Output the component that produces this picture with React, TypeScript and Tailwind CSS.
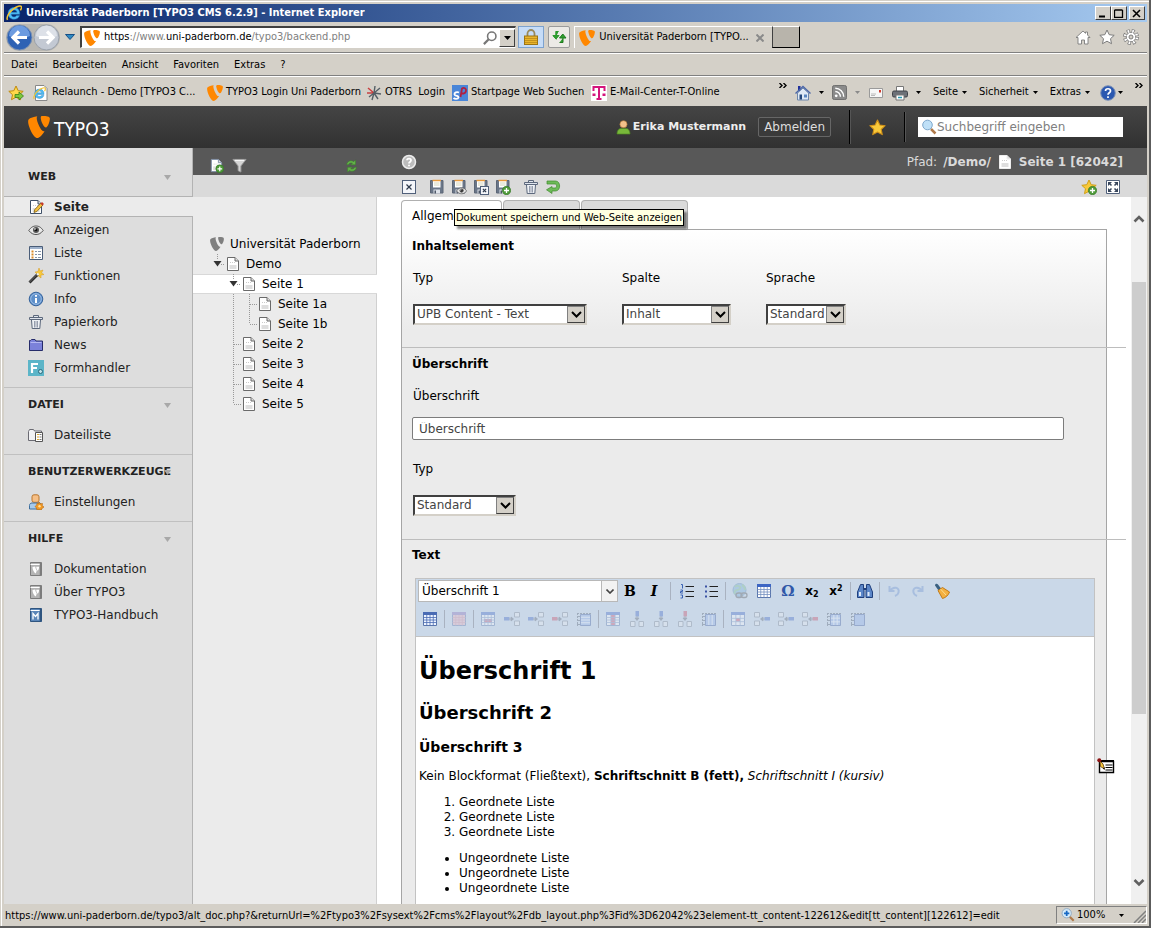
import { useState, type ReactNode } from "react";
import { clsx } from "clsx";

const T3_BIG =
  "M18.08 16.539c-.356.105-.64.144-1.012.144-3.048 0-7.524-10.652-7.524-14.197 0-1.305.31-1.74.745-2.114C6.56.808 2.082 2.177.651 3.917.34 4.352.155 5.037.155 5.907.155 11.442 6.063 24 10.23 24c1.928 0 5.179-3.172 7.85-7.461";
const T3_SMALL =
  "M16.136 0c3.855 0 7.709.622 7.709 2.797 0 4.415-2.8 9.765-4.23 9.765-2.549 0-5.72-7.09-5.72-10.635C13.895.311 14.517 0 16.136 0";

function Svg({ size = 16, box = 16, className, children }: { size?: number; box?: number; className?: string; children: ReactNode }) {
  return (
    <svg width={size} height={size} viewBox={`0 0 ${box} ${box}`} fill="none" className={clsx("shrink-0", className)} aria-hidden="true">
      {children}
    </svg>
  );
}

function Typo3Logo({ size = 16, color = "#ff8700" }: { size?: number; color?: string }) {
  return (
    <Svg size={size} box={24}>
      <path d={T3_BIG} fill={color} />
      <path d={T3_SMALL} fill={color} />
    </Svg>
  );
}

function Caret({ className = "text-black" }: { className?: string }) {
  return (
    <svg width="5" height="3" viewBox="0 0 5 3" className={clsx("shrink-0", className)} aria-hidden="true">
      <path d="M0 0h5L2.500 3z" fill="currentColor" />
    </svg>
  );
}

/* ---------- browser icons ---------- */

function IeLogo() {
  return (
    <>
      <path d="M13.800 9.300H5.300c.1 1.600 1.200 2.600 2.800 2.600 1.100 0 2-.5 2.500-1.300h3c-.8 2.300-2.900 3.700-5.500 3.700-3.500 0-6-2.400-6-5.800s2.500-5.900 6-5.900c3.400 0 5.800 2.500 5.700 6.700zM10.900 7.300c-.2-1.400-1.200-2.300-2.700-2.300-1.600 0-2.600.9-2.900 2.300z" fill="#4fbcf2" stroke="#1c78c0" strokeWidth=".5" />
      <path d="M1.500 14.800C0 12.500 3 7 7.500 3.800 11 1.200 14.500.3 15.300 1.500c.5.900 0 2.400-.9 3.800" stroke="#f4c430" strokeWidth="1.500" />
    </>
  );
}

function StarShape({ fill, stroke }: { fill: string; stroke: string }) {
  return <path d="M8 1l2.200 4.700 5 .6-3.700 3.400 1 5L8 12.200l-4.500 2.500 1-5L.8 6.300l5-.6z" fill={fill} stroke={stroke} strokeLinejoin="round" />;
}

function PlusBadge() {
  return (
    <>
      <circle cx="11.500" cy="11.500" r="4.200" fill="#4f9a3a" stroke="#2f7420" strokeWidth=".6" />
      <path d="M11.500 9v5M9 11.500h5" stroke="#fff" strokeWidth="1.300" />
    </>
  );
}

function Lock() {
  return (
    <Svg>
      <path d="M4.500 7V4.500a3.500 3.500 0 017 0V7" stroke="#9a8a5a" strokeWidth="1.800" />
      <rect x="1.500" y="7" width="13" height="8.500" fill="#e9b52c" stroke="#9c7414" />
      <path d="M2 9.500h12M2 11.500h12M2 13.500h12" stroke="#c4921c" />
    </Svg>
  );
}

function Refresh() {
  return (
    <Svg>
      <path d="M7.500 2H4.500v4.500H1.500L5.500 11V7" fill="#2f9e2f" />
      <path d="M7.500 2.500H5V7M2 6.500h6L5 10z" stroke="#2d9a2d" fill="#2f9e2f" />
      <path d="M8.500 13.500H12V9M8.500 9h6.500l-3.200-4z" stroke="#1f7a1f" fill="#2f9e2f" />
    </Svg>
  );
}

function House() {
  return (
    <Svg>
      <path d="M3 1h2.500v5H3z" fill="#20309c" />
      <path d="M2.500 8v7h11V8L8 3z" fill="#dfe9f5" stroke="#6c86ac" />
      <path d="M.5 8.500L8 1.500l7.500 7" stroke="#4a66a8" strokeWidth="1.400" />
      <path d="M4.500 9.500h2.500v5H4.500z" fill="#24487c" />
      <path d="M9 9.500h3v3H9z" fill="#5a86c0" />
    </Svg>
  );
}

function Magnifier() {
  return (
    <Svg>
      <path d="M10 10l4.500 4.500" stroke="#b07a4a" strokeWidth="2.500" />
      <circle cx="6.500" cy="6" r="4.800" fill="#bfe0f7" stroke="#7fa8cc" />
    </Svg>
  );
}

/* ---------- module icons ---------- */

function PageShape({ stroke = "#6a6a6a" }: { stroke?: string }) {
  return (
    <>
      <path d="M2.500 1.500h7.500l3.500 3.500v9.500h-11z" fill="#fff" stroke={stroke} />
      <path d="M10 1.500V5h3.500" stroke={stroke} fill="#ddd" />
      <path d="M5 6.500h6" stroke="#ccc" strokeDasharray="1 1" />
      <path d="M4.500 9h7v4h-7z" fill="#dedede" />
    </>
  );
}

function TrashShape() {
  return (
    <>
      <path d="M5.500 3V1.500h5V3M1.500 3.500h13v2h-13z" fill="#dfe4ec" stroke="#5c687c" />
      <path d="M3.500 6l.7 8.500h7.600L12.500 6" fill="#eef1f5" stroke="#5c687c" />
      <path d="M6.500 7v6.500M8 7v6.500M9.500 7v6.500" stroke="#7d889a" strokeWidth=".8" />
    </>
  );
}

function EyeShape() {
  return (
    <>
      <path d="M.8 8.500C3 5 5.500 4 8 4s5 1 7.200 4.500C13 11.500 10.500 12.500 8 12.500S3 11.500.8 8.500z" fill="#e8e8e8" stroke="#555" />
      <circle cx="8" cy="8" r="3" fill="#555" />
      <circle cx="8" cy="8" r="1.300" fill="#111" />
      <circle cx="7" cy="7" r=".8" fill="#fff" />
    </>
  );
}

function Book({ light, dark, children }: { light: string; dark: string; children: ReactNode }) {
  return (
    <Svg>
      <path d="M2.500 1.500h11v13h-11z" fill={light} stroke={dark} />
      <path d="M2.500 3.500h10" stroke="#fff" />
      <path d="M12.500 2v12.500" stroke={dark} strokeWidth="1.500" />
      {children}
    </Svg>
  );
}

function ManualV() {
  return (
    <Book light="#b4b4b4" dark="#7c7c7c">
      <path d="M4.500 6l2.700-.5c.2 1.500.8 3 1.600 4l-1 3C5.800 11.500 4.500 8.500 4.500 6zM8.200 5.700h2.800c.3 1.500-.5 3-1.300 4-.8-1-1.500-2.500-1.500-4z" fill="#fff" />
    </Book>
  );
}

const moduleIcons: Record<string, ReactNode> = {
  Seite: (
    <Svg>
      <PageShape stroke="#3f5068" />
      <path d="M6 13.500l.8-3L13 4l2 2-6.200 6.500z" fill="#f6c342" stroke="#7a5a10" strokeWidth=".8" />
      <path d="M12.300 4.700L14 3l2 2-1.600 1.600z" fill="#c63a2a" />
    </Svg>
  ),
  Anzeigen: (
    <Svg>
      <EyeShape />
    </Svg>
  ),
  Liste: (
    <Svg>
      <path d="M1.500 1.500h13v13h-13z" fill="#fff" stroke="#4a5d78" />
      <path d="M2 3h12" stroke="#9fb2cc" strokeWidth="2" />
      <path d="M3.500 6.500h2M3.500 9.500h2M3.500 12.500h2" stroke="#d98a28" strokeWidth="2" />
      <path d="M7 6.500h2M10 6.500h3M7 9.500h2M10 9.500h3M7 12.500h2M10 12.500h3" stroke="#8593a8" />
    </Svg>
  ),
  Funktionen: (
    <Svg>
      <path d="M11 0l1 3 3-1-1.500 3 2.500 1.500-3 .5v3l-2.500-2L8 9l1-3-2-2 3-.5z" fill="#f8c93a" stroke="#d89a1a" strokeWidth=".5" />
      <path d="M1.500 14.500l8-8" stroke="#2c2c2c" strokeWidth="2.800" />
      <path d="M1.500 14l7-7" stroke="#8a8a8a" strokeWidth=".7" />
      <path d="M9 7l1.500-1.500" stroke="#eee" strokeWidth="2.200" />
    </Svg>
  ),
  Info: (
    <Svg>
      <circle cx="8" cy="8" r="6.800" fill="#5d8fca" stroke="#35639c" />
      <circle cx="8" cy="8" r="5.300" stroke="#a9c7ea" strokeWidth=".8" />
      <path d="M8 4v1.800M8 7v5" stroke="#fff" strokeWidth="2" />
    </Svg>
  ),
  Papierkorb: (
    <Svg>
      <TrashShape />
    </Svg>
  ),
  News: (
    <Svg>
      <path d="M1.500 13.500v-10h1l1-1h3.500l1 1.500h6.500v9.500z" fill="#7b81da" stroke="#262c6a" />
      <path d="M2.500 5.500h11" stroke="#b3b7f2" />
    </Svg>
  ),
  Formhandler: (
    <Svg>
      <path d="M0 0h16v16H0z" fill="#5cb5c8" />
      <path d="M4 13V4h6M4 8h5" stroke="#fff" strokeWidth="2.200" />
      <circle cx="12.500" cy="11.500" r="2" fill="#bfe2ea" stroke="#2c6a7c" />
    </Svg>
  ),
  Dateiliste: (
    <Svg>
      <path d="M.5 13.500v-9l1-2h4l1 1.500h7v9.500z" fill="#f2f2f4" stroke="#6a6a72" />
      <path d="M7.500 5.500h7v9h-7z" fill="#fff" stroke="#555" />
      <path d="M9 7.500h2M9 10h2M9 12.500h2" stroke="#d9a52e" />
      <path d="M11.500 7.500h2M11.500 10h2M11.500 12.500h2" stroke="#777" />
    </Svg>
  ),
  Einstellungen: (
    <Svg>
      <rect x="4" y=".8" width="7" height="7.500" rx="2" fill="#f6bf86" stroke="#b9762e" />
      <path d="M1.500 15v-3.500c0-1.500 1-2.500 2.500-2.500h7c1.500 0 2.500 1 2.500 2.500V15z" fill="#a8cbec" stroke="#3e6f9e" />
      <path d="M11 8l1.300 1.800 2.200-.3-.3 2.200L16 13l-1.800 1.300-1 1.700-2.200-.5-2.200.3L8.500 14 7 12.500l1.700-1.300.3-2 1.700.3z" fill="#f29a24" stroke="#b9650a" strokeWidth=".6" />
      <circle cx="11.500" cy="12.300" r="1.200" fill="#ffe0a0" />
    </Svg>
  ),
  Dokumentation: <ManualV />,
  "Über TYPO3": <ManualV />,
  "TYPO3-Handbuch": (
    <Book light="#5b86b8" dark="#2f5580">
      <path d="M5 12.500v-6l2.500 3 2.500-3v6" stroke="#fff" strokeWidth="1.300" />
    </Book>
  ),
};

function Floppy({ children }: { children?: ReactNode }) {
  return (
    <Svg>
      <path d="M1.500 1.500h12.500v12.500h-12.500z" fill="#6a7688" stroke="#5c6676" />
      <path d="M4 2h7.500v6.500H4z" fill="#fff" />
      <path d="M3.500 1.500h8.500" stroke="#e89a3c" strokeWidth="1.500" />
      <path d="M5 4h5.500M5 6h5.500" stroke="#c9c9a8" strokeWidth=".8" />
      <path d="M4.500 10.500h6.500v4h-6.500z" fill="#dfe3ea" />
      <path d="M5.500 11.500h1.500v3h-1.500z" fill="#4c5666" />
      {children}
    </Svg>
  );
}

function CrossBox({ x = 0, y = 0, s = 14 }: { x?: number; y?: number; s?: number }) {
  const i = s * 0.32;
  return (
    <>
      <rect x={x + 0.5} y={y + 0.5} width={s - 1} height={s - 1} fill="#f4f6fa" stroke="#50607a" />
      <path d={`M${x + i} ${y + i}L${x + s - i} ${y + s - i}M${x + s - i} ${y + i}L${x + i} ${y + s - i}`} stroke="#2e3a4c" strokeWidth="1.200" />
    </>
  );
}

/* ---------- editor icons ---------- */

function Grid({ rows = 4, cols = 4, head = "#3d66c4", fill = "#fff", line = "#7590c0", mark }: { rows?: number; cols?: number; head?: string; fill?: string; line?: string; mark?: ReactNode }) {
  const w = 13 / cols;
  const h = 10 / rows;
  return (
    <Svg>
      <path d="M1.500 1.500h13v13h-13z" fill={fill} stroke="#5a76ac" />
      <path d="M1 2.500h14" stroke={head} strokeWidth="3" />
      {mark}
      {Array.from({ length: cols - 1 }, (_, i) => (
        <path key={`c${i}`} d={`M${1.5 + w * (i + 1)} 4v10.500`} stroke={line} strokeWidth=".8" />
      ))}
      {Array.from({ length: rows - 1 }, (_, i) => (
        <path key={`r${i}`} d={`M1.500 ${4 + h * (i + 1)}h13`} stroke={line} strokeWidth=".8" />
      ))}
    </Svg>
  );
}

// ruled table with a dashed left and top band
function RuledGrid({ cols = 4, rows = 4, fill = "#8fb0ea" }: { cols?: number; rows?: number; fill?: string }) {
  return (
    <Svg>
      <path d="M1 2.500h14M1.500 2v13" stroke="#555f70" strokeDasharray="2 1" />
      <path d="M4.500 3.500h10v11h-10z" fill={fill} stroke="#3c5a9c" />
      <path d="M1 5.500h3M1 9.500h3M1 13.500h3" stroke="#555f70" />
      {Array.from({ length: cols - 1 }, (_, i) => (
        <path key={`c${i}`} d={`M${4.5 + (10 / cols) * (i + 1)} 4v10`} stroke="#f4f8ff" />
      ))}
      {Array.from({ length: rows - 1 }, (_, i) => (
        <path key={`r${i}`} d={`M5 ${3.5 + (11 / rows) * (i + 1)}h9`} stroke="#f4f8ff" />
      ))}
    </Svg>
  );
}

function InsertCells({ turn, accent = "#3d66c4", flip }: { turn: 0 | 90; accent?: string; flip?: boolean }) {
  return (
    <Svg className="overflow-visible">
      <g transform={`rotate(${turn} 8 8)${flip ? " translate(16 0) scale(-1 1)" : ""}`}>
        <path d="M0 6h5.500v3.500H0z" fill={accent} />
        <path d="M5 8h4M7 6l2.500 2L7 10z" stroke="#5a6270" fill="#5a6270" strokeWidth=".8" />
        <path d="M10.500 1.500h5v4.500h-5zM10.500 10h5v4.500h-5z" fill="#eef0f4" stroke="#808894" />
      </g>
    </Svg>
  );
}

const redMark = <path d="M4 8h8v3.500H4z" fill="#d8506a" />;

const tableTools: { label: string; icon: ReactNode }[][] = [
  [
    { label: "Zeileneigenschaften", icon: <Grid mark={redMark} /> },
    { label: "Zeile oberhalb", icon: <InsertCells turn={0} /> },
    { label: "Zeile unterhalb", icon: <InsertCells turn={0} /> },
    { label: "Zeile löschen", icon: <InsertCells turn={0} accent="#c84860" /> },
    { label: "Zeile teilen", icon: <RuledGrid cols={1} rows={4} /> },
  ],
  [
    { label: "Spalteneigenschaften", icon: <Grid cols={3} mark={<path d="M6 4h4v10H6z" fill="#d8506a" />} /> },
    { label: "Spalte links", icon: <InsertCells turn={90} /> },
    { label: "Spalte rechts", icon: <InsertCells turn={90} /> },
    { label: "Spalte löschen", icon: <InsertCells turn={90} accent="#c84860" /> },
    { label: "Spalte teilen", icon: <RuledGrid cols={3} rows={1} /> },
  ],
  [
    { label: "Zelleneigenschaften", icon: <Grid cols={3} rows={3} mark={<path d="M6 7h4v3.500H6z" fill="#d8506a" />} /> },
    { label: "Zelle davor", icon: <InsertCells turn={0} flip /> },
    { label: "Zelle danach", icon: <InsertCells turn={0} flip /> },
    { label: "Zelle löschen", icon: <InsertCells turn={0} flip accent="#c84860" /> },
    { label: "Zelle teilen", icon: <RuledGrid cols={3} rows={3} /> },
    { label: "Zellen verbinden", icon: <RuledGrid cols={1} rows={1} /> },
  ],
];

function Tool({ label, faded, children }: { label: string; faded?: boolean; children: ReactNode }) {
  return (
    <button type="button" aria-label={label} disabled={faded} className={clsx("flex h-6 w-6 items-center justify-center text-black", faded && "opacity-35")}>
      {children}
    </button>
  );
}

function Sep({ wide }: { wide?: boolean }) {
  return <span className={clsx("h-[18px] w-px bg-[#a9b2c0]", wide ? "mx-1" : "mx-0.5")} />;
}

/* ---------- browser chrome ---------- */

function WindowButton({ label, children }: { label: string; children: ReactNode }) {
  return (
    <button type="button" aria-label={label} className="flex h-[14px] w-4 items-center justify-center border border-t-white border-r-[#404040] border-b-[#404040] border-l-white bg-[#d4d0c8]">
      <svg width="10" height="9" viewBox="0 0 10 9" fill="none" stroke="#000" aria-hidden="true">
        {children}
      </svg>
    </button>
  );
}

function TitleBar() {
  return (
    <div className="flex h-[18px] items-center gap-1 bg-linear-to-r from-[#0a246a] to-[#a6caf0] px-0.5 text-[11px] font-bold text-white">
      <Svg>
        <IeLogo />
      </Svg>
      <span className="truncate">Universität Paderborn [TYPO3 CMS 6.2.9] - Internet Explorer</span>
      <div className="ml-auto flex">
        <WindowButton label="Minimieren">
          <path d="M1 7.500h6" strokeWidth="2" />
        </WindowButton>
        <WindowButton label="Maximieren">
          <path d="M.5 1h8M.5 1v7.500h8V1" strokeWidth="1.300" />
        </WindowButton>
        <span className="w-0.5" />
        <WindowButton label="Schließen">
          <path d="M1 1l7 7M8 1L1 8" strokeWidth="1.600" />
        </WindowButton>
      </div>
    </div>
  );
}

function AddressBar() {
  return (
    <div className="flex h-[31px] items-center border-b border-[#808080] pr-2 pl-0.5">
      <div className="flex items-center rounded-full bg-[#b9b7b2]">
        <button type="button" aria-label="Zurück">
          <Svg size={27} box={27}>
            <circle cx="13.500" cy="13.500" r="12.500" fill="#2e62b4" stroke="#7d93b4" />
            <path d="M3 12a10.500 10.500 0 0121 0c-7 3-14 3-21 0z" fill="#6c9be0" />
            <path d="M21 13.500H8M13 7.500l-6 6 6 6" stroke="#fff" strokeWidth="3.200" />
          </Svg>
        </button>
        <button type="button" aria-label="Vorwärts">
          <Svg size={27} box={27}>
            <circle cx="13.500" cy="13.500" r="12.500" fill="#c3c9d3" stroke="#9aa1ab" />
            <path d="M3 12a10.500 10.500 0 0121 0c-7 3-14 3-21 0z" fill="#dde1e8" />
            <path d="M6 13.500h13M14 7.500l6 6-6 6" stroke="#fff" strokeWidth="3.200" />
          </Svg>
        </button>
      </div>
      <button type="button" aria-label="Verlauf" className="flex w-5 justify-center">
        <svg width="10" height="6" viewBox="0 0 10 6" aria-hidden="true">
          <path d="M.5.5h9L5 5.500z" fill="#2f8ac4" stroke="#174f86" />
        </svg>
      </button>
      <div className="flex h-[22px] min-w-0 flex-[435] items-center border-t-2 border-r border-b border-l-2 border-t-[#404040] border-r-[#d4d0c8] border-b-white border-l-[#404040] bg-white">
        <span className="ml-0.5">
          <Typo3Logo />
        </span>
        <div role="textbox" aria-label="Adresse" contentEditable suppressContentEditableWarning className="min-w-0 flex-1 truncate px-1 text-[11px] text-[#808080] outline-none">
          <span className="text-black">https</span>://www.<span className="text-black">uni-paderborn.de</span>/typo3/backend.php
        </div>
        <button type="button" aria-label="Suchen" className="mr-0.5">
          <Svg size={14}>
            <circle cx="10" cy="6" r="4.800" stroke="#777" strokeWidth="1.800" />
            <path d="M6.500 9.500L1 15" stroke="#777" strokeWidth="2.500" />
          </Svg>
        </button>
        <button type="button" aria-label="Adressliste" className="flex h-[18px] w-4 items-center justify-center border border-t-white border-r-[#404040] border-b-[#404040] border-l-white bg-[#d4d0c8]">
          <svg width="7" height="4" viewBox="0 0 7 4" aria-hidden="true">
            <path d="M0 0h7L3.500 4z" />
          </svg>
        </button>
      </div>
      <button type="button" aria-label="Sicherheitsbericht" className="ml-0.5 flex h-[22px] w-[26px] items-center justify-center border border-[#7da2ce] bg-[#c6dcf7]">
        <Lock />
      </button>
      <button type="button" aria-label="Aktualisieren" className="ml-1 flex h-[22px] w-[22px] items-center justify-center rounded-xs border border-[#9a9a9a] bg-[#eceae6]">
        <Refresh />
      </button>
      <div className="flex min-w-0 flex-[571] items-center">
        <div className="ml-1 flex h-[22px] w-[198px] items-center gap-1 border-t border-l border-white pl-1 text-[11px]">
          <Typo3Logo />
          <span className="flex-1 whitespace-nowrap">Universität Paderborn [TYPO...</span>
          <button type="button" aria-label="Tab schließen" className="mr-2">
            <Svg size={8} box={8}>
              <path d="M.5.5l7 7M7.500.5l-7 7" stroke="#8a8a8a" strokeWidth="2" />
            </Svg>
          </button>
        </div>
        <button type="button" aria-label="Neuer Tab" className="h-[22px] w-7 border border-t-white border-r-black border-b-black border-l-[#404040] bg-[#b8b4ab]" />
        <div className="ml-auto flex gap-2">
          <Svg>
            <path d="M1 8.500L8 2l2.500 2.300V3h2v3L15 8.500h-2V15H9.500v-4h-3v4H3V8.500z" fill="#fff" stroke="#7c7c7c" strokeWidth=".9" />
          </Svg>
          <Svg>
            <StarShape fill="#fff" stroke="#7c7c7c" />
          </Svg>
          <Svg>
            <circle cx="8" cy="8" r="6" stroke="#7c7c7c" strokeWidth="4" strokeDasharray="2.800 1.910" />
            <circle cx="8" cy="8" r="4.800" fill="#fff" stroke="#7c7c7c" />
            <circle cx="8" cy="8" r="6" stroke="#fff" strokeWidth="2.600" strokeDasharray="1.600 3.110" strokeDashoffset="-.6" />
            <circle cx="8" cy="8" r="2" fill="#d4d0c8" stroke="#7c7c7c" />
          </Svg>
        </div>
      </div>
    </div>
  );
}

const favourites: { label: string; width: string; icon: ReactNode }[] = [
  {
    label: "Relaunch - Demo [TYPO3 C...",
    width: "w-[174px]",
    icon: (
      <Svg>
        <path d="M2.500.5h8.500l3 3v12h-11.500z" fill="#fff" stroke="#888" />
        <g transform="translate(0 2) scale(.8)">
          <IeLogo />
        </g>
      </Svg>
    ),
  },
  { label: "TYPO3 Login Uni Paderborn", width: "w-[159px]", icon: <Typo3Logo /> },
  {
    label: "OTRS  Login",
    width: "w-[86px]",
    icon: (
      <Svg>
        <path d="M8 8L2 3M8 8H1" stroke="#c84040" strokeWidth="1.500" />
        <path d="M8 8l1-7M8 8l6-5M8 8l7 1M8 8l4 6M8 8l-2 7M8 8l-5 4" stroke="#555f66" strokeWidth="1.400" />
      </Svg>
    ),
  },
  {
    label: "Startpage Web Suchen",
    width: "w-[139px]",
    icon: (
      <Svg>
        <path d="M0 0h16v16H0z" fill="#4a86d8" />
        <path d="M7 7.500C5 6.500 2 7.500 2.500 9.500S7 10.500 6.500 12.500 2.500 14 1.500 13" stroke="#fff" strokeWidth="1.800" />
        <path d="M8.500 12L10 3.500c2-1.500 4.500 0 4 2.500s-3 3-5 2" stroke="#b02040" strokeWidth="1.800" />
      </Svg>
    ),
  },
  {
    label: "E-Mail-Center-T-Online",
    width: "w-[130px]",
    icon: (
      <Svg>
        <path d="M0 0h16v16H0z" fill="#fff" />
        <path d="M2.500 6V2h11v4M8 2v11.500M5.500 14h5" stroke="#d4147c" strokeWidth="2" />
        <path d="M1.500 8.500h3V11h-3zM11.500 8.500h3V11h-3z" fill="#d4147c" />
      </Svg>
    ),
  },
];

function CommandMenu({ label }: { label: string }) {
  return (
    <button type="button" className="flex items-center gap-1">
      {label}
      <Caret />
    </button>
  );
}

function More() {
  return (
    <svg width="8" height="5" viewBox="0 0 8 5" fill="none" className="mt-1 shrink-0 self-start" aria-hidden="true">
      <path d="M.5 0L3 2.500.5 5M4.500 0L7 2.500 4.500 5" stroke="#000" strokeWidth="1.400" />
    </svg>
  );
}

function FavouritesBar() {
  return (
    <div className="flex h-[29px] items-center px-1 pt-0.5 text-[11px] whitespace-nowrap">
      <button type="button" aria-label="Zu Favoriten hinzufügen" className="mr-[9px]">
        <Svg>
          <StarShape fill="#ffd84a" stroke="#c08a10" />
          <path d="M7 9.500h4V7l4.500 4-4.500 4v-2.500H7z" fill="#7cc83c" stroke="#3a7d14" strokeWidth=".8" />
        </Svg>
      </button>
      {favourites.map((f) => (
        <a key={f.label} href="#" className={clsx("flex items-center gap-[3px]", f.width)}>
          {f.icon}
          <span className="whitespace-pre">{f.label}</span>
        </a>
      ))}
      <div className="ml-auto flex h-full items-center">
        <More />
        <span className="w-2" />
        <House />
        <span className="mx-2">
          <Caret />
        </span>
        <Svg size={15}>
          <rect x=".5" y=".5" width="15" height="15" rx="2" fill="#8a8a8a" stroke="#6c6c6c" />
          <circle cx="4.500" cy="11.500" r="1.500" fill="#fff" />
          <path d="M3.500 7a5.500 5.500 0 015.500 5.500M3.500 3.500a9 9 0 019 9" stroke="#fff" strokeWidth="1.500" />
        </Svg>
        <span className="mx-2">
          <Caret className="text-[#8a8a8a]" />
        </span>
        <Svg>
          <path d="M1.500 3.500h13v9h-13z" fill="#f7f7f7" stroke="#9a9a9a" />
          <path d="M11 5h2v2.500h-2z" fill="#d23a2a" />
          <path d="M3 9h5M3 10.500h4" stroke="#bbb" />
        </Svg>
        <Svg className="ml-2">
          <path d="M4.500 1.500h7V7h-7z" fill="#fff" stroke="#777" />
          <rect x=".5" y="6" width="15" height="6" rx="1.500" fill="#6d7178" stroke="#3f4248" />
          <path d="M4 10h8v5H4z" fill="#fff" stroke="#777" />
          <path d="M6 12.500h4" stroke="#2a9ab0" strokeWidth="1.500" />
        </Svg>
        <span className="mr-3 ml-2">
          <Caret />
        </span>
        <div className="flex gap-3">
          <CommandMenu label="Seite" />
          <CommandMenu label="Sicherheit" />
          <CommandMenu label="Extras" />
        </div>
        <Svg className="ml-2.5">
          <circle cx="8" cy="8" r="7.300" fill="#2b58b0" stroke="#7f93b8" />
          <path d="M5.500 6C5.500 3 10.500 3 10.500 6c0 1.800-2.500 1.800-2.500 3.800M8 11.200V13" stroke="#fff" strokeWidth="1.700" />
        </Svg>
        <span className="mr-3 ml-0.5">
          <Caret />
        </span>
        <More />
      </div>
    </div>
  );
}

/* ---------- TYPO3 backend ---------- */

function TopBar() {
  return (
    <header className="flex h-[42px] items-center bg-linear-to-b from-[#454545] to-[#313131] pr-6 pl-6 text-[12px]">
      <Typo3Logo size={22} />
      <span className="mt-1 ml-1 font-['DejaVu_Sans_Condensed','DejaVu_Sans',sans-serif] text-[19px] leading-none text-white">TYPO3</span>
      <div className="ml-auto flex items-center">
        <Svg size={15}>
          <circle cx="8" cy="4.500" r="3.800" fill="#f3c08a" stroke="#b47a3a" strokeWidth=".7" />
          <path d="M1 15c0-4 2-6 4.500-6h5C13 9 15 11 15 15z" fill="#78b83a" stroke="#4c8420" strokeWidth=".7" />
        </Svg>
        <span className="ml-0.5 text-[11px] font-bold text-[#eee]">Erika Mustermann</span>
        <button type="button" className="ml-3 h-5 rounded-xs border border-[#666] bg-[#3a3a3a] px-[5px] leading-none text-[#ddd]">
          Abmelden
        </button>
        <span className="ml-[18px] h-[34px] w-0.5 border-r border-[#555] bg-black" />
        <button type="button" aria-label="Lesezeichen" className="mx-[18px]">
          <Svg size={17}>
            <StarShape fill="#f8c93a" stroke="#d09018" />
          </Svg>
        </button>
        <span className="h-[30px] w-0.5 border-r border-[#555] bg-black" />
        <label className="ml-3 flex h-5 w-[205px] items-center bg-white pl-[3px]">
          <Magnifier />
          <input type="search" aria-label="Suche" placeholder="Suchbegriff eingeben" className="min-w-0 flex-1 outline-none placeholder:text-[#808080]" />
        </label>
      </div>
    </header>
  );
}

const modules = [
  { title: "WEB", items: ["Seite", "Anzeigen", "Liste", "Funktionen", "Info", "Papierkorb", "News", "Formhandler"] },
  { title: "DATEI", items: ["Dateiliste"] },
  { title: "BENUTZERWERKZEUGE", items: ["Einstellungen"] },
  { title: "HILFE", items: ["Dokumentation", "Über TYPO3", "TYPO3-Handbuch"] },
];

function ModuleMenu() {
  return (
    <nav className="flex w-[189px] shrink-0 flex-col border-r border-[#b3b3b3] bg-[#dddddd] text-[12px] text-[#222]">
      {modules.map((group, g) => (
        <section key={group.title} className={clsx("pb-2", g < modules.length - 1 && "border-b border-[#c0c0c0]")}>
          <h2 className={clsx("flex items-center pl-6 text-[11px] font-bold", g === 0 ? "h-12 pt-2.5" : "h-[35px]")}>
            <span className="w-[136px] whitespace-nowrap">{group.title}</span>
            <svg width="7" height="5" viewBox="0 0 7 5" className="shrink-0" aria-hidden="true">
              <path d="M0 0h7L3.500 5z" fill="#a8a8a8" />
            </svg>
          </h2>
          {group.items.map((item) => (
            <a
              key={item}
              href="#"
              className={clsx(
                "flex items-center gap-2.5 pl-6",
                item === "Seite" ? "relative -mr-px mb-px h-[21px] border-y border-[#b3b3b3] bg-[#ebebeb] font-bold" : "h-[23px]",
              )}
            >
              {moduleIcons[item]}
              {item}
            </a>
          ))}
        </section>
      ))}
    </nav>
  );
}

type Guide = "blank" | "line" | "tee" | "end" | "open";

const guidePaths: Record<Guide, string> = {
  blank: "",
  line: "M8.500 0v20",
  tee: "M8.500 0v20M9 10.500h7",
  end: "M8.500 0v10M9 10.500h7",
  open: "M8.500 0v6M12 10.500h4",
};

const tree: { label: string; guides: Guide[]; root?: boolean }[] = [
  { label: "Universität Paderborn", guides: [], root: true },
  { label: "Demo", guides: ["open"] },
  { label: "Seite 1", guides: ["blank", "open"] },
  { label: "Seite 1a", guides: ["blank", "line", "tee"] },
  { label: "Seite 1b", guides: ["blank", "line", "end"] },
  { label: "Seite 2", guides: ["blank", "tee"] },
  { label: "Seite 3", guides: ["blank", "tee"] },
  { label: "Seite 4", guides: ["blank", "tee"] },
  { label: "Seite 5", guides: ["blank", "end"] },
];

function PageTree() {
  const [selected, setSelected] = useState("Seite 1");

  return (
    <aside className="flex w-[184px] shrink-0 flex-col">
      <div className="flex h-[27px] shrink-0 items-center bg-[#585858] pt-2 pr-[18px] pl-4">
        <Svg size={15}>
          <PageShape stroke="#7f8ea6" />
          <PlusBadge />
        </Svg>
        <Svg size={15} className="ml-2">
          <path d="M1 1.500h14L9.500 8.500v6.500l-3-1.500v-5z" fill="#d4d4d4" stroke="#9a9a9a" />
          <path d="M3 2.500h10" stroke="#fff" />
        </Svg>
        <Svg size={14} className="ml-auto">
          <path d="M2 6.500C2 3 6.500.5 10 3l2-2v5.500H6.500L8.500 5C7 4 4.500 4.800 4 6.500z" fill="#62b04a" stroke="#3c8228" strokeWidth=".6" />
          <path d="M13 9.500c0 3.500-4.500 6-8 3.500l-2 2V9.500h5.500L6.500 11c1.500 1 4 .2 4.500-1.500z" fill="#62b04a" stroke="#3c8228" strokeWidth=".6" />
        </Svg>
      </div>
      <div className="h-[22px] shrink-0 bg-[#dadada]" />
      <ul className="flex-1 border-r border-[#d0d0d0] bg-[#ebebeb] pt-[37px] text-[12px] text-black">
        {tree.map((node) => (
          <li key={node.label} className={clsx("h-5", selected === node.label && "relative -mr-px border-y border-[#d8d8d8] bg-white")}>
            <button type="button" onClick={() => setSelected(node.label)} className="flex h-full w-full items-center pl-4">
              {node.guides.map((g, i) => (
                <svg key={i} width="16" height="20" viewBox="0 0 16 20" fill="none" className="shrink-0" aria-hidden="true">
                  <path d={guidePaths[g]} stroke="#999" strokeDasharray="1 1" />
                  {g === "open" && <path d="M4.500 7h8l-4 5.500z" fill="#333" />}
                </svg>
              ))}
              {node.root ? (
                <span className="mx-px">
                  <Typo3Logo size={14} color="#7f7f7f" />
                </span>
              ) : (
                <Svg>
                  <PageShape />
                </Svg>
              )}
              <span className="ml-[5px] whitespace-nowrap">{node.label}</span>
            </button>
          </li>
        ))}
      </ul>
    </aside>
  );
}

function DocHeader() {
  return (
    <>
      <div className="flex h-[27px] shrink-0 items-center bg-[#585858] pr-6 pl-6 text-[12px] text-[#dadada]">
        <Svg>
          <circle cx="8" cy="8" r="6.500" fill="#bcbcbc" stroke="#ededed" strokeWidth="1.500" />
          <path d="M6 6.300C6 4 10 4 10 6.300 10 8 8 8 8 9.500M8 10.800v1.500" stroke="#fff" strokeWidth="1.800" />
        </Svg>
        <div className="ml-auto flex items-center gap-1.5 whitespace-nowrap">
          Pfad: <b>/Demo/</b>
          <Svg>
            <PageShape stroke="#eee" />
          </Svg>
          <b>Seite 1 [62042]</b>
        </div>
      </div>
      <div className="flex h-[22px] shrink-0 items-center bg-[#dadada] pt-px pr-[26px] pl-6">
        <button type="button" aria-label="Schließen">
          <Svg>
            <CrossBox x={1} y={1} />
          </Svg>
        </button>
        <div className="ml-3 flex gap-[6px]">
          <button type="button" aria-label="Dokument speichern">
            <Floppy />
          </button>
          <button type="button" aria-label="Dokument speichern und Web-Seite anzeigen">
            <Floppy>
              <g transform="translate(5 6) scale(.7)">
                <EyeShape />
              </g>
            </Floppy>
          </button>
          <button type="button" aria-label="Dokument speichern und schließen">
            <Floppy>
              <CrossBox x={7} y={7} s={9} />
            </Floppy>
          </button>
          <button type="button" aria-label="Dokument speichern und neu">
            <Floppy>
              <PlusBadge />
            </Floppy>
          </button>
        </div>
        <button type="button" aria-label="Löschen" className="ml-3">
          <Svg>
            <TrashShape />
          </Svg>
        </button>
        <button type="button" aria-label="Rückgängig" className="ml-1.5">
          <Svg>
            <path d="M2 2h8.500c5.500 0 5.500 10 0 10H7v2.500l-5.500-3.700L7 7.500V9h3c2.200 0 2.200-4 0-4H2z" fill="#6dba58" stroke="#3f8a2c" strokeWidth=".7" />
          </Svg>
        </button>
        <button type="button" aria-label="Lesezeichen anlegen" className="ml-auto">
          <Svg>
            <StarShape fill="#f8c93a" stroke="#d0a018" />
            <PlusBadge />
          </Svg>
        </button>
        <button type="button" aria-label="In neuem Fenster öffnen" className="ml-2">
          <Svg>
            <path d="M1.500 1.500h13v13h-13z" fill="#fff" stroke="#50607a" />
            <path d="M3 3h4L3 7zM13 3H9l4 4zM3 13h4L3 9zM13 13H9l4-4z" fill="#38465c" />
            <path d="M4 4l2.500 2.500M12 4L9.500 6.500M4 12l2.500-2.500M12 12L9.500 9.500" stroke="#38465c" strokeWidth="1.500" />
          </Svg>
        </button>
      </div>
    </>
  );
}

function Select({ id, options, width }: { id: string; options: string[]; width: string }) {
  return (
    <div className={clsx("relative h-[21px] border-2 border-t-[#404040] border-r-[#d4d0c8] border-b-[#d4d0c8] border-l-[#404040] bg-white", width)}>
      <select id={id} className="block h-full w-full appearance-none pl-0.5 text-[12px] leading-[17px] text-[#444] outline-none">
        {options.map((o) => (
          <option key={o}>{o}</option>
        ))}
      </select>
      <span className="pointer-events-none absolute inset-y-0 right-0 flex w-[18px] items-center justify-center border border-t-[#808080] border-r-[#404040] border-b-[#404040] border-l-[#808080] bg-[#d4d0c8]">
        <svg width="11" height="7" viewBox="0 0 11 7" fill="none" aria-hidden="true">
          <path d="M1 1l4.500 4.500L10 1" stroke="#000" strokeWidth="2" />
        </svg>
      </span>
    </div>
  );
}

function Field({ id, label, children }: { id: string; label: string; children: ReactNode }) {
  return (
    <div className="flex flex-col gap-4">
      <label htmlFor={id} className="leading-5">
        {label}
      </label>
      {children}
    </div>
  );
}

function Tabs() {
  return (
    <div className="relative flex items-end gap-px">
      <button type="button" className="relative z-10 -mb-px h-[30px] w-[101px] rounded-t-sm border border-b-0 border-[#b0b0b0] bg-white pl-2.5 text-left">
        Allgemein
      </button>
      <button type="button" aria-label="Tab 2" className="h-[29px] w-[77px] rounded-t-sm border border-b-0 border-[#b0b0b0] bg-[#dadada]" />
      <button type="button" aria-label="Tab 3" className="h-[29px] w-[107px] rounded-t-sm border border-b-0 border-[#b0b0b0] bg-[#dadada]" />
      <div role="tooltip" className="absolute top-[9px] left-[53px] z-20 border border-black bg-[#ffffe1] px-px font-['DejaVu_Sans_Condensed','DejaVu_Sans',sans-serif] text-[11px] leading-[15px] whitespace-nowrap shadow-[3px_3px_2px_rgba(0,0,0,0.45)]">
        Dokument speichern und Web-Seite anzeigen
      </div>
    </div>
  );
}

function Editor() {
  return (
    <div className="mr-[11px] ml-[13px] flex min-h-[340px] flex-1 flex-col border border-b-0 border-[#c2c2c2]">
      <div className="border-b border-[#c2c2c2] bg-[#cad8e8] px-0.5 pb-[5px]">
        <div className="flex h-6 items-center">
          <div className="relative h-[22px] w-[200px] border border-[#b8b8b8] bg-white">
            <select aria-label="Blockformat" className="block h-full w-full appearance-none pl-[3px] text-[12px] leading-5 text-black outline-none">
              <option>Überschrift 1</option>
              <option>Überschrift 2</option>
              <option>Überschrift 3</option>
            </select>
            <span className="pointer-events-none absolute inset-y-0 right-0 flex w-4 items-center justify-center border-l border-[#b8b8b8] bg-[#f2f2f2]">
              <svg width="8" height="5" viewBox="0 0 8 5" fill="none" aria-hidden="true">
                <path d="M.5.5L4 4 7.500.5" stroke="#444" strokeWidth="1.600" />
              </svg>
            </span>
          </div>
          <Tool label="Fett">
            <b className="font-['DejaVu_Serif',serif] text-[14px]">B</b>
          </Tool>
          <Tool label="Kursiv">
            <i className="font-['DejaVu_Serif',serif] text-[14px] font-bold">I</i>
          </Tool>
          <Sep wide />
          <Tool label="Geordnete Liste">
            <Svg>
              <path d="M6.500 3.500H15M6.500 8.500H15M6.500 13.500H15" stroke="#222" />
              <path d="M2 1.500h1.500v4M1.500 7h2v1.500h-2V10h2.500M1.500 12h2v3h-2" stroke="#3a62b4" />
            </Svg>
          </Tool>
          <Tool label="Ungeordnete Liste">
            <Svg>
              <path d="M6.500 3.500H15M6.500 8.500H15M6.500 13.500H15" stroke="#222" />
              <path d="M2 2.500h2v2H2zM2 7.500h2v2H2zM2 12.500h2v2H2z" fill="#3a52a4" />
            </Svg>
          </Tool>
          <Sep />
          <Tool label="Link" faded>
            <Svg>
              <circle cx="7.500" cy="7" r="6.500" fill="#7ab0dc" stroke="#5a88b4" />
              <path d="M3 4c2-2 4-1 5 0s-1 3-3 3-3 2-2 4M10 2c2 1 3 3 3 5" stroke="#7cc08c" strokeWidth="2" />
              <rect x="4" y="10" width="6" height="4.500" rx="2.200" stroke="#555" strokeWidth="1.300" />
              <rect x="9" y="10" width="6" height="4.500" rx="2.200" stroke="#555" strokeWidth="1.300" />
            </Svg>
          </Tool>
          <Tool label="Tabelle einfügen">
            <Grid />
          </Tool>
          <Tool label="Sonderzeichen">
            <span className="font-['DejaVu_Serif',serif] text-[15px] font-bold text-[#3058a8]">Ω</span>
          </Tool>
          <Tool label="Tiefgestellt">
            <span className="text-[12px] font-bold">
              x<sub className="text-[8px]">2</sub>
            </span>
          </Tool>
          <Tool label="Hochgestellt">
            <span className="text-[12px] font-bold">
              x<sup className="text-[8px]">2</sup>
            </span>
          </Tool>
          <Sep />
          <Tool label="Suchen und ersetzen">
            <Svg>
              <path d="M3.500 1.500h3V5l.5 3v6.500H.5V9zM9.500 1.500h3L15.500 9v5.500H9V8l.5-3z" fill="#5b86c8" stroke="#1f3f7c" />
              <path d="M3 9v4M11.500 9v4" stroke="#dce8f8" strokeWidth="2" />
              <path d="M6.500 6h3" stroke="#1f3f7c" strokeWidth="2" />
            </Svg>
          </Tool>
          <Sep />
          <Tool label="Rückgängig" faded>
            <Svg>
              <path d="M3.500 3v5h5M4 8c3-5 10-4 8.500 1.500-.5 2-2 3-3.500 3.500" stroke="#6a90d0" strokeWidth="2" />
            </Svg>
          </Tool>
          <Tool label="Wiederherstellen" faded>
            <Svg>
              <path d="M12.500 3v5h-5M12 8C9 3 2 4 3.500 9.500c.5 2 2 3 3.500 3.500" stroke="#6a90d0" strokeWidth="2" />
            </Svg>
          </Tool>
          <Tool label="Formatierung entfernen">
            <Svg>
              <path d="M1 2.500C1 .5 3 0 4 1.500l3 4-2.500 2z" fill="#3a6080" />
              <path d="M4 7.500l4.500-3L15.500 9c-1 3-3.500 5.500-7 6.500z" fill="#f4b040" stroke="#c07a18" />
              <path d="M6.500 6L12 12" stroke="#fadc90" />
            </Svg>
          </Tool>
        </div>
        <div className="mt-1 flex h-6 items-center">
          <Tool label="Rahmen ein/aus">
            <Grid fill="#eef4ff" head="#4a6cb4" line="#4a6cb4" />
          </Tool>
          <Sep />
          <Tool label="Tabelleneigenschaften" faded>
            <Grid fill="#eeb4c0" head="#8a70b8" line="#d88c9c" />
          </Tool>
          {tableTools.map((group, i) => (
            <div key={i} className="flex items-center">
              <Sep />
              {group.map((t) => (
                <Tool key={t.label} label={t.label} faded>
                  {t.icon}
                </Tool>
              ))}
            </div>
          ))}
        </div>
      </div>
      <div contentEditable suppressContentEditableWarning role="textbox" aria-label="Text" aria-multiline="true" className="flex-1 bg-white px-[3px] pt-4 leading-[15px] text-black outline-none">
        <h1 className="text-[24px] leading-9 font-bold">Überschrift 1</h1>
        <h2 className="mt-3 text-[18px] leading-6 font-bold">Überschrift 2</h2>
        <h3 className="mt-3 text-[14px] leading-5 font-bold">Überschrift 3</h3>
        <p className="mt-3">
          Kein Blockformat (Fließtext), <b>Schriftschnitt B (fett),</b> <i>Schriftschnitt I (kursiv)</i>
        </p>
        <ol className="mt-[11px] list-decimal pl-10">
          <li>Geordnete Liste</li>
          <li>Geordnete Liste</li>
          <li>Geordnete Liste</li>
        </ol>
        <ul className="mt-[11px] list-disc pl-10">
          <li>Ungeordnete Liste</li>
          <li>Ungeordnete Liste</li>
          <li>Ungeordnete Liste</li>
        </ul>
      </div>
    </div>
  );
}

function ScrollBar() {
  return (
    <div className="flex w-4 shrink-0 flex-col items-center bg-[#f0f0f0] px-px pt-3 pb-3" aria-hidden="true">
      <svg width="12" height="20" viewBox="0 0 12 20" fill="none" className="shrink-0">
        <path d="M1.500 12.500L6 8l4.500 4.500" stroke="#606060" strokeWidth="2.600" />
      </svg>
      <div className="flex w-full flex-1 flex-col">
        <div className="flex-[53]" />
        <div className="flex-[432] bg-[#cdcdcd]" />
        <div className="flex-[158]" />
      </div>
      <svg width="12" height="20" viewBox="0 0 12 20" fill="none" className="shrink-0">
        <path d="M1.500 8L6 12.500 10.500 8" stroke="#606060" strokeWidth="2.600" />
      </svg>
    </div>
  );
}

function ContentForm() {
  return (
    <div className="flex min-w-0 flex-1 flex-col overflow-hidden bg-white px-6 pt-[3px] text-[12px] text-black">
      <Tabs />
      <form className="relative flex flex-1 flex-col border border-b-0 border-[#a5a5a5] bg-[linear-gradient(to_bottom,#ffffff,#ebebeb_100px)]">
        <h3 className="mt-1.5 ml-2.5 leading-5 font-bold">Inhaltselement</h3>
        <div className="mt-3 mb-[22px] ml-[11px] flex gap-[35px]">
          <Field id="ctype" label="Typ">
            <Select id="ctype" options={["UPB Content - Text"]} width="w-[174px]" />
          </Field>
          <Field id="column" label="Spalte">
            <Select id="column" options={["Inhalt"]} width="w-[109px]" />
          </Field>
          <Field id="language" label="Sprache">
            <Select id="language" options={["Standard"]} width="w-[80px]" />
          </Field>
        </div>
        <hr className="-mr-5 border-[#bdbdbd]" />
        <h3 className="mt-1.5 ml-2.5 leading-5 font-bold">Überschrift</h3>
        <div className="mt-3 mr-[42px] ml-2.5 flex flex-col">
          <label htmlFor="headline" className="ml-px leading-5">
            Überschrift
          </label>
          <input id="headline" defaultValue="Überschrift" className="mt-[11px] h-[23px] rounded-xs border border-[#7c7c7c] bg-white px-1.5 leading-5 text-[#444]" />
        </div>
        <div className="mt-[19px] mb-[23px] ml-[11px] flex">
          <Field id="headtype" label="Typ">
            <Select id="headtype" options={["Standard"]} width="w-[103px]" />
          </Field>
        </div>
        <hr className="-mr-5 border-[#bdbdbd]" />
        <h3 className="mt-[5px] mb-[13px] ml-2.5 leading-5 font-bold">Text</h3>
        <Editor />
        <div className="absolute top-[528px] -right-[9px]">
          <svg width="18" height="17" viewBox="0 0 18 17" fill="none" aria-hidden="true">
            <path d="M2.500 3.500h14v11h-14z" fill="#fff" stroke="#000" strokeWidth="1.400" />
            <path d="M2 3h15" stroke="#000" strokeWidth="2" />
            <path d="M8.500 7h7M8.500 9.500h7M8.500 12h7" stroke="#000" />
            <path d="M3 3l3 3 1.500 5-4-2.500z" fill="#f5c53a" stroke="#5a3a08" strokeWidth=".8" />
            <path d="M6 10.500l1.500 1.500v-3z" fill="#000" />
            <circle cx="2.300" cy="2.300" r="2" fill="#8c1212" />
          </svg>
        </div>
      </form>
    </div>
  );
}

function StatusBar() {
  return (
    <footer className="flex h-[22px] shrink-0 items-center text-[11px]">
      <span className="min-w-0 flex-1 truncate pt-0.5 pl-px">
        https://www.uni-paderborn.de/typo3/alt_doc.php?&amp;returnUrl=%2Ftypo3%2Fsysext%2Fcms%2Flayout%2Fdb_layout.php%3Fid%3D62042%23element-tt_content-122612&amp;edit[tt_content][122612]=edit
      </span>
      <button type="button" className="flex h-[18px] w-[91px] shrink-0 items-center border border-t-[#808080] border-r-white border-b-white border-l-[#808080] pl-1">
        <Svg size={14}>
          <path d="M10 10l4.500 4.500" stroke="#b07a4a" strokeWidth="2.500" />
          <circle cx="6.500" cy="6" r="5.300" fill="#d6ebfa" stroke="#8aa6c0" />
          <path d="M6.500 3v6M3.500 6h6" stroke="#1668c4" strokeWidth="2" />
        </Svg>
        <span className="ml-0.5 flex-1 text-left">100%</span>
        <Caret />
        <svg width="14" height="14" viewBox="0 0 14 14" className="ml-2 self-end" fill="none" aria-hidden="true">
          <path d="M2 14L14 2M6 14l8-8M10 14l4-4" stroke="#808080" strokeWidth="1.500" />
        </svg>
      </button>
    </footer>
  );
}

export default function App() {
  return (
    <div className="flex h-screen flex-col overflow-hidden border-r-2 border-b-2 border-[#5c5c5c] bg-[#d4d0c8] font-['DejaVu_Sans_Condensed','DejaVu_Sans',sans-serif] text-black">
      <div className="flex min-h-0 flex-1 flex-col border-t border-l border-[#d4d0c8]">
        <div className="flex min-h-0 flex-1 flex-col border-t border-l border-white pt-0.5 pr-0.5 pl-0.5">
          <TitleBar />
          <AddressBar />
          <div className="flex h-[23px] items-center gap-[15px] border-t border-b border-t-white border-b-[#808080] px-[7px] pt-0.5 text-[11px]">
            {["Datei", "Bearbeiten", "Ansicht", "Favoriten", "Extras", "?"].map((m) => (
              <button key={m} type="button">
                {m}
              </button>
            ))}
          </div>
          <div className="border-t border-white">
            <FavouritesBar />
          </div>
          <div className="flex min-h-0 flex-1 flex-col font-['DejaVu_Sans',sans-serif]">
            <TopBar />
            <div className="flex min-h-0 flex-1">
              <ModuleMenu />
              <PageTree />
              <main className="flex min-w-0 flex-1 flex-col">
                <DocHeader />
                <div className="flex min-h-0 flex-1">
                  <ContentForm />
                  <ScrollBar />
                </div>
              </main>
            </div>
          </div>
          <StatusBar />
        </div>
      </div>
    </div>
  );
}
